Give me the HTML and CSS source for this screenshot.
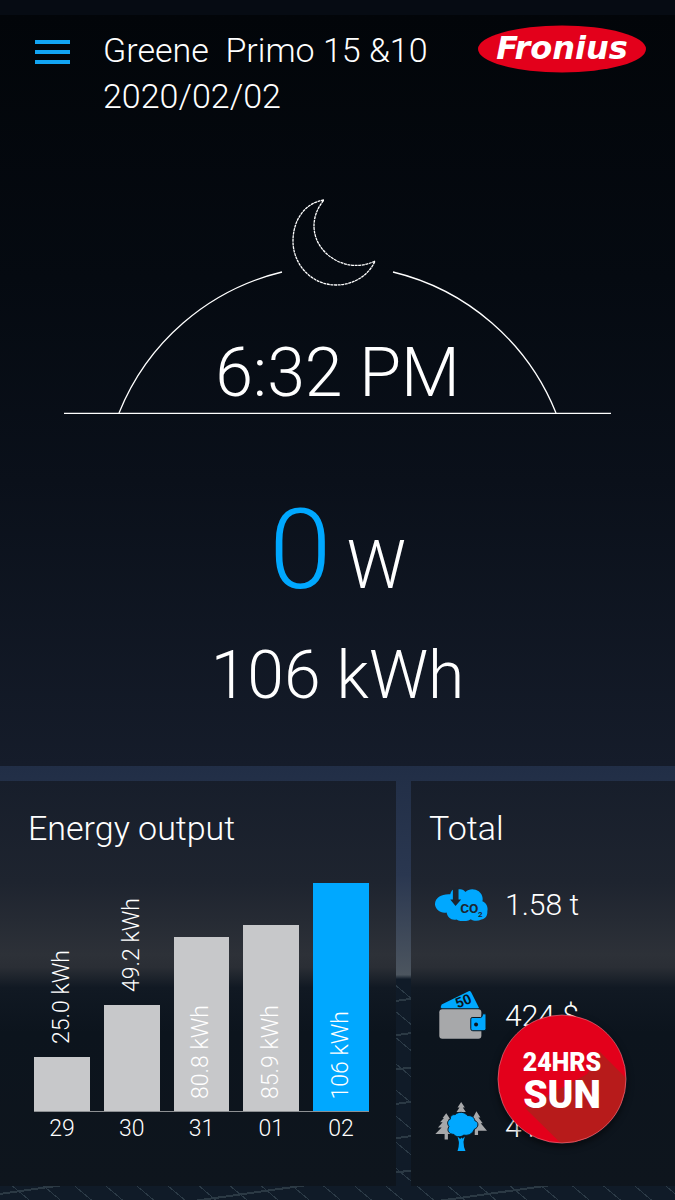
FILE: index.html
```html
<!DOCTYPE html>
<html lang="en">
<head>
  <meta charset="utf-8">
  <meta name="viewport" content="width=device-width, initial-scale=1.0">
  <title>Solar - Greene Primo</title>
  <link rel="stylesheet" href="styles.css">
</head>
<body>

  <main class="overview">
    <header class="header">
      <button class="menu" aria-label="Menu"><span></span><span></span><span></span></button>
      <h1>Greene  Primo 15 &amp;10
2020/02/02</h1>
      <svg class="logo" viewBox="0 0 168 48">
        <ellipse cx="84" cy="24" rx="84" ry="23.5" fill="#e3001b"/>
        <text x="84" y="34" text-anchor="middle">Fronius</text>
      </svg>
    </header>

    <section class="sky">
      <svg class="arc" viewBox="0 0 547 216">
        <path d="M55 215 A235 235 0 0 1 218 74"/>
        <path d="M329 74 A235 235 0 0 1 492 215"/>
        <path d="M0 215.500H547"/>
        <path stroke-dasharray="3 .6" d="M260 2 C240 5 229 23 229 43 C229 67 248 87 272 87 C290 87 305 77 311 63 C283 77 250 56 250 28 C250 18 254 9 260 2Z"/>
      </svg>
      <div class="time">6:32 PM</div>
    </section>

    <div class="power">0 <span class="unit">W</span></div>
    <div class="energy">106 kWh</div>
  </main>

  <div class="cards">
    <section class="card output">
      <h2>Energy output</h2>
      <div class="bars">
        <div class="column"><span class="value above">25.0 kWh</span><div class="bar" style="height: 23.6%"></div></div>
        <div class="column"><span class="value above">49.2 kWh</span><div class="bar" style="height: 46.4%"></div></div>
        <div class="column"><div class="bar" style="height: 76.2%"><span class="value">80.8 kWh</span></div></div>
        <div class="column"><div class="bar" style="height: 81.4%"><span class="value">85.9 kWh</span></div></div>
        <div class="column"><div class="bar today" style="height: 100%"><span class="value">106 kWh</span></div></div>
      </div>
      <div class="days"><span>29</span><span>30</span><span>31</span><span>01</span><span>02</span></div>
    </section>

    <section class="card total">
      <h2>Total</h2>
      <ul>
        <li>
          <svg viewBox="30 45 160 105">
            <path fill="#00a8ff" d="M76 67 C78 57 84 51 92 52 H102 C110 50 118 54 122 60 C132 49 150 49 162 58 C172 66 176 78 173 88 C184 92 191 104 188 118 C189 132 181 142 170 143 C158 149 146 147 138 142 C124 151 106 150 95 143 C80 147 68 137 65 122 C48 126 31 113 30 98 C29 78 50 65 76 67Z"/>
            <path fill="#1c2530" d="M84 45H101V83H109L92 102L76 83H84Z"/>
            <text class="co2" x="106" y="123" font-size="41">CO</text>
            <text class="co2" x="160" y="137" font-size="24">2</text>
          </svg>
          <span>1.58 t</span>
        </li>
        <li>
          <svg viewBox="30 30 160 150">
            <path fill="#00a8ff" d="M47 82 L50 74 L133 33 Q138 32 140 38 L163 84 L160 85 H50Z"/>
            <text class="note" x="99" y="86" transform="rotate(-23 99 86)">50</text>
            <rect x="43" y="88" width="127" height="89" rx="9" fill="#a7a8aa"/>
            <path fill="#00a8ff" stroke="#0b141d" stroke-width="3" d="M142 113 H168 Q174 112 173 102 H184 V147 Q184 153 178 153 H144 Q138 153 138 147 V118 Q138 113 142 113Z"/>
            <circle cx="154" cy="134" r="6" fill="#0b141d"/>
          </svg>
          <span>424 $</span>
        </li>
        <li>
          <svg viewBox="30 35 160 153">
            <path fill="#a7a8aa" d="M109 38 L120 55 H114 L123 68 H95 L104 55 H98Z"/>
            <path fill="#a7a8aa" d="M64 72 L76 90 H70 L80 109 H74 L88 135 H69 V151 H59 V135 H31 L50 115 H39 L53 99 H45 L57 86 H53Z"/>
            <path fill="#a7a8aa" d="M155 66 L167 85 H161 L174 102 H168 L187 125 H160 V138 H150 V120 L145 85Z"/>
            <path fill="#00a8ff" stroke="#0c151e" stroke-width="3" d="M91 76 C101 66 119 67 128 79 C141 78 150 86 150 94 C164 99 162 116 149 120 C142 137 128 140 117 138 C106 147 89 142 87 136 C71 135 65 124 72 112 C65 102 68 94 76 90 C75 80 82 75 91 76Z"/>
            <path fill="#00a8ff" d="M98 142 L106 150 L110 145 L113 149 L120 142 L116 158 Q116 173 122 186 H98 Q103 172 102 158Z"/>
          </svg>
          <span>41</span>
        </li>
      </ul>
      <a class="sun" href="#" aria-label="24 hours of sun">
        <svg viewBox="0 0 130 130">
          <defs><clipPath id="disc"><circle cx="65" cy="65" r="64"/></clipPath></defs>
          <circle cx="65" cy="65" r="64" fill="#e3001b"/>
          <path clip-path="url(#disc)" fill="#b71b1b" d="M103 38 L150 85 V150 H85 L28 94 L90 60Z"/>
          <circle cx="65" cy="65" r="64" fill="none" stroke="#ef7c88" stroke-opacity=".6"/>
          <text x="65" y="57" font-size="25">24HRS</text>
          <text x="65" y="94" font-size="39">SUN</text>
        </svg>
      </a>
    </section>
  </div>

</body>
</html>
```
FILE: styles.css
```css
* { box-sizing: border-box; }

body {
  margin: 0;
  padding-top: 15px;
  background-color: #060b13;
  color: #fff;
  font-family: Roboto, sans-serif;
  font-weight: 300;
}

h1, h2 {
  margin: 0;
  font-size: 34px;
  font-weight: 300;
  line-height: 46px;
}

/* Top panel */
.overview {
  padding-bottom: 51px;
  background: linear-gradient(#020509, #050a11 35%, #0a101a 62%, #151c2a);
  text-align: center;
}
.header {
  display: flex;
  align-items: flex-start;
  padding: 12px 29px 0 35px;
  text-align: left;
}
.header h1 { flex: 1; white-space: pre; }
.menu {
  display: flex;
  flex-direction: column;
  gap: 6px;
  width: 35px;
  margin: 13px 33px 0 0;
  padding: 0;
  border: none;
  background: none;
  cursor: pointer;
}
.menu span { width: 100%; height: 4px; background-color: #12a5f4; }
.logo { width: 168px; height: 48px; margin-top: -2px; }
.logo text {
  fill: #fff;
  font: italic bold 32px "DejaVu Sans", sans-serif;
}

.sky {
  display: grid;
  margin: 79px 64px 0;
}
.arc, .time { grid-area: 1 / 1; }
.arc {
  display: block;
  width: 100%;
  fill: none;
  stroke: #fff;
  stroke-width: 1.3;
}
.time { align-self: end; padding-bottom: 1px; font-size: 68px; line-height: 80px; }

.power { margin-top: 70px; color: #00a8ff; font-size: 112px; line-height: 131px; }
.unit { margin-left: -12px; color: #fff; font-size: 66px; line-height: 78px; }
.energy { margin-top: 22px; font-size: 66px; line-height: 78px; }

/* Cards, with the evening sky and the panels behind them */
.cards {
  display: grid;
  grid-template-columns: 3fr 2fr;
  gap: 15px;
  padding: 15px 0;
  background:
    linear-gradient(#212e46, #2a3750 25%, #4c555f 48%, transparent 49%),
    repeating-linear-gradient(40deg, transparent 0 19px, #2b3a46 19px 20px),
    repeating-linear-gradient(-8deg, transparent 0 32px, #2b3944 32px 34px),
    #101b28;
}
.card {
  background: linear-gradient(#171e2b, #1e242f 25%, #2d3138 43%, #2a2e35 46%, #111923 51%, #0c141d 62%, #0e151d);
}
.output { padding: 24px 27px 40px 28px; }
.bars, .days {
  display: grid;
  grid-template-columns: repeat(5, 1fr);
  column-gap: 14px;
  margin-left: 6px;
}
.bars { height: 229px; margin-top: 32px; border-bottom: 1px solid #8d9093; }
.column {
  display: flex;
  flex-direction: column;
  justify-content: flex-end;
  align-items: center;
  height: 228px;
}
.bar {
  display: flex;
  justify-content: center;
  align-items: flex-end;
  width: 100%;
  padding-bottom: 12px;
  background-color: #c7c8ca;
}
.today { background-color: #00a8ff; }
.value {
  writing-mode: vertical-rl;
  transform: rotate(180deg);
  font-size: 23px;
  line-height: 28px;
  white-space: nowrap;
}
.above { margin-bottom: 13px; }
.days { font-size: 23px; line-height: 34px; text-align: center; }

.total { position: relative; padding: 24px 18px 23px; }
.total ul {
  display: grid;
  gap: 41px;
  margin: 18px 0 0;
  padding: 0 0 0 6px;
  list-style: none;
}
.total li {
  display: flex;
  align-items: center;
  gap: 17px;
  height: 70px;
  font-size: 30px;
}
.total li svg { width: 53px; }
.co2 { fill: #1c2530; font-weight: 700; }
.note { fill: #0b141d; font-size: 42px; font-weight: 700; }

/* Floating badge */
.sun {
  position: absolute;
  right: 48px;
  bottom: 42px;
  width: 130px;
  height: 130px;
  border-radius: 50%;
  box-shadow: 0 3px 6px rgba(0, 0, 0, 0.5);
}
.sun svg { display: block; }
.sun text { fill: #fff; font-weight: 900; text-anchor: middle; }
```
